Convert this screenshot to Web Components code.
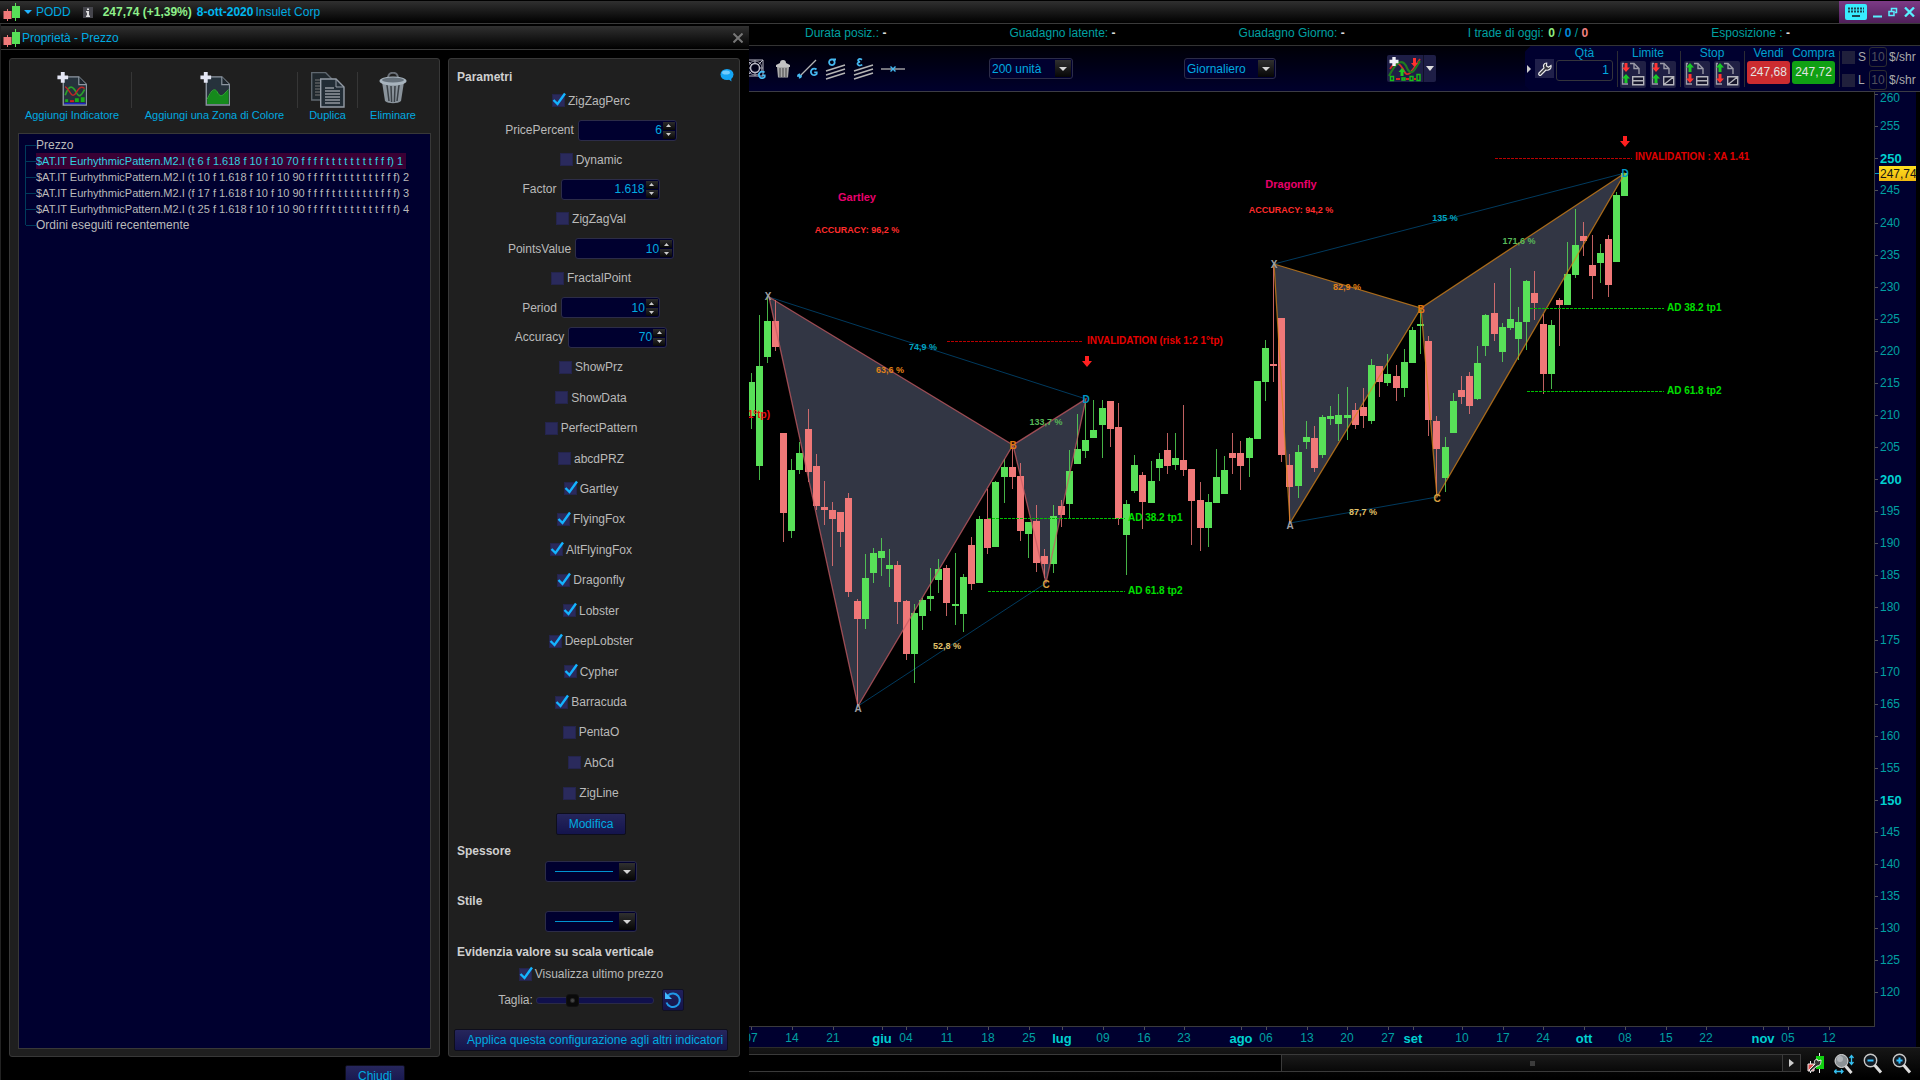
<!DOCTYPE html>
<html lang="it">
<head>
<meta charset="utf-8">
<title>PODD - Insulet Corp</title>
<style>
html,body{margin:0;height:100%;background:#000;overflow:hidden}
body{font:12px/16px "Liberation Sans",Arial,sans-serif;color:#bababa;--cy:#00aae0;--teal:#00a0a2;--navy:#00002f;--line:#383838}
</style>
</head>
<body>
<trading-app></trading-app>
<script>
const BASE = `*{box-sizing:border-box}button,input,select{font:inherit;color:inherit;margin:0;padding:0;border:0;background:none;outline:0}button{cursor:pointer}svg{display:block;flex:none}`;
function define(name, render, after) {
  customElements.define(name, class extends HTMLElement {
    connectedCallback() {
      if (this.shadowRoot) return;
      const t = document.createElement('template');
      t.innerHTML = render(this);
      const r = this.attachShadow({ mode: 'open' });
      r.innerHTML = `<style>${BASE}</style>`;
      r.append(t.content.cloneNode(true));
      if (after) after(this, r);
    }
  });
}
const attr = (e, n, d = '') => e.getAttribute(n) ?? d;
const CANDLES = `<svg width="18" height="18" viewBox="0 0 18 18"><path d="M4.5 6v12" stroke="#e87878"/><rect x="0.5" y="8" width="8" height="8" fill="#f07a7a"/><path d="M12.5 0v18" stroke="#5ce05c"/><rect x="9" y="3" width="8" height="12" fill="#58e058"/></svg>`;

/* Glyphs used by the toolbars */
const DOC = '<path d="M6 5h16l8 8v21H6z" fill="#26323c" stroke="#8d97a2" stroke-width="1.4"/><path d="M22 5v8h8" fill="#1d262e" stroke="#8d97a2" stroke-width="1.2"/>';
const PLUS = '<path d="M3.500 0h4v3.500h3.500v4H7.500V11h-4V7.500H0v-4h3.500z" fill="#e4e6f4"/>';
const ICONS = {
  indicator: `<svg width="30" height="34" viewBox="0 0 30 35">${DOC}<path d="M8 24c4-12 8-10 12-2 3 5 5 1 8-4" stroke="#2aa02a" stroke-width="1.800" fill="none"/><path d="M8 15c4 2 6 12 10 8 3-4 5-10 10-6" stroke="#c02626" stroke-width="1.500" fill="none"/><path d="M8 28h3v3H8zM18 27h4v4h-4zM24 26h4v5h-4z" fill="#18b018"/><path d="M13 29h4v2h-4z" fill="#d02020"/><path d="M7 32.500h22" stroke="#1c28c8" stroke-width="1.500"/>${PLUS}</svg>`,
  zone: `<svg width="30" height="34" viewBox="0 0 30 35">${DOC}<path d="M7 29c4-9 7-13 10-9 3 6 5 5 8 2l4-3v14H7z" fill="#158a1c"/><path d="M7 28c4-9 7-12 10-8 3 6 5 5 8 2l4-4" stroke="#30b030" fill="none"/>${PLUS}</svg>`,
  copy: `<svg width="34" height="36" viewBox="0 0 34 36"><path d="M.7.7h14l7 7V28H.7z" fill="#20282e" stroke="#606870" stroke-width="1.300"/><path d="M4 8h6M4 11h6M4 14h6M4 17h6M4 20h6M4 23h6" stroke="#777"/><path d="M9.700 7H25l8 8v20H9.700z" fill="#222d36" stroke="#949ca6" stroke-width="1.400"/><path d="M25 7v8h8" fill="none" stroke="#949ca6"/><path d="M14 16h9M14 19h15M14 22h15M14 25h15M14 28h15M14 31h15" stroke="#c8ccd2" stroke-width="1.200"/></svg>`,
  bin: `<svg width="28" height="32" viewBox="0 0 28 32"><path d="M9 6c0-7 10-7 10 0" fill="none" stroke="#6a7078" stroke-width="2"/><path d="M3 10l3 19c3 3 13 3 16 0l3-19z" fill="#8a939b"/><path d="M8 13l2 16M12 14l.6 16M16 14l-.6 16M20 13l-2 16" stroke="#3a4046" stroke-width="1.500"/><ellipse cx="14" cy="9" rx="13.500" ry="4.500" fill="#a8b4be"/><ellipse cx="14" cy="8" rx="11" ry="2.600" fill="#66717b"/></svg>`,
  grid: `<svg width="20" height="20" viewBox="0 0 20 20"><path d="M1 1h16v16H1z" fill="none" stroke="#b8b8c4"/><path d="M1 1l5 5M17 1l-5 5M1 17l5-5M9 1v4M1 9h4M13 9h4M9 13v4" stroke="#b8b8c4"/><circle cx="9" cy="9" r="4.500" fill="none" stroke="#b8b8c4" stroke-width="1.500"/><circle cx="9" cy="9" r="7" fill="none" stroke="#90909c"/><path d="M18.500 13.500a3.300 3.300 0 1 0 .2 4.500v-1.600h-2.500" fill="none" stroke="#45b8f0" stroke-width="1.800"/></svg>`,
  trash: `<svg width="14" height="18" viewBox="0 0 14 18"><path d="M4 3a3 3 0 0 1 6 0l4 2v2H0V5z" fill="#c4c4c4"/><path d="M1 7h12l-1 10.500H2z" fill="#aaa"/><path d="M4 8v9M7 8v9M10 8v9" stroke="#444"/></svg>`,
  lineg: `<svg width="21" height="20" viewBox="0 0 21 20"><path d="M2 18L19 1" stroke="#b4b4b4" stroke-width="1.300"/><path d="M0 17h5M2.500 14.500v5M.8 15.200l3.400 3.600" stroke="#45b8f0" stroke-width="1.300"/><path d="M19.500 10.500a3.300 3.300 0 1 0 .2 4.500v-1.600h-2.500" fill="none" stroke="#45b8f0" stroke-width="1.800"/></svg>`,
  sigma: `<svg width="21" height="22" viewBox="0 0 21 22"><path d="M1 13l19-6M1 17l19-6M1 21l19-6" stroke="#b4b4b4" stroke-width="1.500"/><path d="M11 1.500H6.500a2.800 2.800 0 1 0 2 0.500" fill="none" stroke="#45b8f0" stroke-width="1.800"/></svg>`,
  epsilon: `<svg width="21" height="22" viewBox="0 0 21 22"><path d="M1 13l19-6M1 17l19-6M1 21l19-6" stroke="#b4b4b4" stroke-width="1.500"/><path d="M9 1.800C6-.2 3 2.500 7 4 2.500 4.500 4.500 9 9.300 6.800" fill="none" stroke="#45b8f0" stroke-width="1.700"/></svg>`,
  hline: `<svg width="24" height="8" viewBox="0 0 24 8"><path d="M0 4h24" stroke="#b4b4b4" stroke-width="1.300"/><path d="M9.500 1.500l5 5M14.500 1.500l-5 5" stroke="#45b8f0" stroke-width="1.400"/></svg>`,
  combo: `<svg width="36" height="26" viewBox="0 0 34 26"><path d="M2 13c6-9 10-6 14 2s8 0 16-12" stroke="#d42a2a" stroke-width="1.800" fill="none"/><path d="M1 20c7-14 14-20 19-6 5 6 7-2 12-9" stroke="#1e7a1e" stroke-width="2.200" fill="none"/><path d="M6 1v9M1.500 5.500h9" stroke="#f0f0f8" stroke-width="3.400"/><path d="M25 2h3v5h2l-3.500 4L23 7h2z" fill="#ff3030"/><path d="M12.500 20v-4h-2l3.500-4 3.500 4h-2v4z" fill="#22c822"/><path d="M2.500 20.500h3v4h-3zM14 22h3v2h-3zM22 20.500h3v4h-3zM29 18.500h3v6h-3z" fill="none" stroke="#18c018" stroke-width="1.400"/><path d="M8 23h4M18 23h3M26 23h2" stroke="#e02020" stroke-width="2"/></svg>`,
  wrench: `<svg width="14" height="14" viewBox="0 0 14 14"><path d="M13 3.500l-2.500 1.800-2-1.300.2-3C5.500 1 5 4 6 6L1 11c-1 1.500.8 3 2 2l5-5c3 1 5.600-1.500 5-4.500z" fill="#33333c" stroke="#e8e8e8" stroke-width="1.200"/></svg>`,
  fit: `<svg width="18" height="22" viewBox="0 0 18 22"><path d="M3.500 9v12M12.500 1v20" stroke="#eee"/><path d="M1 12h6v7H1z" fill="#e05050" stroke="#eee"/><path d="M9 4h8v13H9z" fill="#10d010"/><path d="M14 8l-3 1-1-2c-3 1-3 3-2 5l-6 6 1.500 1.500L10 14c3 0 4-2 4-6z" fill="#333" stroke="#eee"/></svg>`,
  autozoom: `<svg width="20" height="22" viewBox="0 0 20 22"><circle cx="7.500" cy="9" r="6.500" fill="#8c9296" stroke="#ddd"/><circle cx="6" cy="7" r="3" fill="#b0b4b8"/><path d="M11.500 14l6 7" stroke="#ddd" stroke-width="3"/><path d="M17.500 4v8M15.500 6l2-2.500 2 2.500M15.500 10l2 2.500 2-2.500M0 19.500h9M2.500 17.500l-2 2 2 2M7 17.500l2 2-2 2" stroke="#35c0f0" stroke-width="1.300" fill="none"/></svg>`,
  zoomout: `<svg width="20" height="22" viewBox="0 0 20 22"><circle cx="7.500" cy="8.500" r="6.200" fill="#141c24" stroke="#c8c8c8" stroke-width="1.400"/><path d="M4.500 8.500h6" stroke="#30c0ff" stroke-width="2"/><path d="M11.500 13l6.500 7.500" stroke="#ddd" stroke-width="3"/></svg>`,
  zoomin: `<svg width="20" height="22" viewBox="0 0 20 22"><circle cx="7.500" cy="8.500" r="6.200" fill="#141c24" stroke="#c8c8c8" stroke-width="1.400"/><path d="M4.500 8.500h6M7.500 5.500v6" stroke="#30c0ff" stroke-width="2"/><path d="M11.500 13l6.500 7.500" stroke="#ddd" stroke-width="3"/></svg>`
};
const order = (a, b, tail) => {
  const up = (y, c) => `<path d="M5 ${y}l4 4.500H6.500V${y + 9}h-3V${y + 4.500}H1z" fill="${c}"/>`;
  const dn = (y, c) => `<path d="M5 ${y + 9}l4-4.500H6.500V${y}h-3v4.500H1z" fill="${c}"/>`;
  return `<svg width="24" height="24" viewBox="0 0 24 24"><path d="M9 1.500h4l5 5V12M13 1.500v5h5M7 22H1.500V1.500H3" fill="none" stroke="#9a9aa6" stroke-width="1.400"/>${(a[0] === 'd' ? dn : up)(1, a === 'd' ? '#ff3434' : '#18c828')}${(b[0] === 'd' ? dn : up)(12, b === 'd' ? '#ff3434' : '#18c828')}${tail === 'box' ? '<path d="M11.700 14.700h11v8h-11zM11.700 18.700h11" fill="#15152c" stroke="#b4b4bc" stroke-width="1.400"/>' : '<path d="M12.700 14.700h10v8h-10zM12.700 22.700l10-8" fill="#15152c" stroke="#b4b4bc" stroke-width="1.400"/>'}</svg>`;
};

define('ui-icon', e => `<style>:host{display:block;flex:none}</style>${ICONS[attr(e, 'name')]}`);

define('app-titlebar', () => `<style>
:host{display:flex;flex:none;height:24px;align-items:center;background:linear-gradient(#303030,#000);border-top:1px solid #000;border-bottom:1px solid #3a3a3a;padding-left:3px;color:var(--cy)}
.tri{width:0;border:4px solid transparent;border-top:4px solid #20b4ff;border-bottom:0;margin:0 4px 0 3px}
.info{width:10px;height:11px;background:#45454c;margin:0 10px 0 12px}
b{margin-right:5px}.p{color:#8ef08a}.d{color:#00b8f0;margin-right:2px}
.win{margin-left:auto;align-self:stretch;display:flex;align-items:center;padding:0 5px 0 6px;background:linear-gradient(#7c3a86,#50205a);gap:6px}
</style>${CANDLES}<span class="tri"></span><span>PODD</span>
<svg class="info" viewBox="0 0 10 11"><path d="M4 1.500h2v1.500H4zM3 4h3v4.500h1V10H3V8.500h1V5.500H3z" fill="#ddd"/></svg>
<b class="p">247,74 (+1,39%)</b><b class="d">8-ott-2020</b><span>Insulet Corp</span>
<div class="win"><button aria-label="Tastiera"><svg width="22" height="16" viewBox="0 0 22 16"><rect width="22" height="16" rx="2" fill="#38ecff"/><path d="M3 4.500h16M3 7.500h16" stroke="#1a4450" stroke-width="2" stroke-dasharray="2 1"/><path d="M7 12h8" stroke="#1a4450" stroke-width="2"/></svg></button>
<button aria-label="Riduci"><svg width="9" height="14"><path d="M0 11.500h9" stroke="#58f0ff" stroke-width="2"/></svg></button>
<button aria-label="Ripristina"><svg width="10" height="10" viewBox="0 0 10 10"><path d="M1 4.500h5v4H1zM3.500 4V1.500h5v4H7" fill="none" stroke="#58f0ff" stroke-width="1.500"/></svg></button>
<button aria-label="Chiudi finestra"><svg width="11" height="10" viewBox="0 0 11 10"><path d="M1 0.500l9 9M10 .5l-9 9" stroke="#58f0ff" stroke-width="2.300"/></svg></button></div>`);

define('dialog-title', () => `<style>
:host{display:flex;height:24px;align-items:center;background:linear-gradient(#303030,#000);border-bottom:1px solid #3a3a3a;padding:0 6px 0 2px;gap:1px;color:var(--cy)}
button{margin-left:auto}</style>${CANDLES}<span><slot></slot></span><button aria-label="Chiudi"><svg width="10" height="10" viewBox="0 0 10 10"><path d="M.5.5l9 9M9.500.5l-9 9" stroke="#777" stroke-width="2"/></svg></button>`);

define('tool-button', e => `<style>
:host{display:flex;border-right:1px solid #363636;height:36px;justify-content:center}
:host(:last-of-type){border:0}
button{display:flex;flex-direction:column;align-items:center;color:var(--cy);white-space:nowrap;font-size:11px;height:50px;line-height:14px;justify-content:space-between}
</style><button><ui-icon name="${attr(e, 'icon')}"></ui-icon><span><slot></slot></span></button>`);

define('tree-list', () => `<style>
:host{display:block;background:var(--navy);border:1px solid var(--line)}
ul{list-style:none;margin:3px 0 0 6px;padding:0}
li{display:flex;height:16px;line-height:16px;white-space:nowrap}
li::before{content:"";width:10px;border-left:1px solid #003c5c;background:linear-gradient(#003c5c,#003c5c) 0 8px/10px 1px no-repeat;flex:none}
li:first-child::before{border-image:linear-gradient(transparent 50%,#003c5c 50%) 1}
li:last-child::before{border-image:linear-gradient(#003c5c 50%,transparent 50%) 1}
.ind{font-size:11px}.sel span{background:#3a0034;color:#30d0e0;padding-right:3px}
</style><ul><li><span>Prezzo</span></li>
<li class="ind sel"><span>$AT.IT EurhythmicPattern.M2.I (t 6 f 1.618 f 10 f 10 70 f f f f t t t t t t t t f f f) 1</span></li>
<li class="ind"><span>$AT.IT EurhythmicPattern.M2.I (t 10 f 1.618 f 10 f 10 90 f f f f t t t t t t t t f f f) 2</span></li>
<li class="ind"><span>$AT.IT EurhythmicPattern.M2.I (f 17 f 1.618 f 10 f 10 90 f f f f t t t t t t t t f f f) 3</span></li>
<li class="ind"><span>$AT.IT EurhythmicPattern.M2.I (t 25 f 1.618 f 10 f 10 90 f f f f t t t t t t t t f f f) 4</span></li>
<li><span>Ordini eseguiti recentemente</span></li></ul>`);

define('prm-check', e => `<style>
:host{display:flex;align-items:center;justify-content:center}
label{display:flex;align-items:center;gap:3px}
input{appearance:none;width:13px;height:13px;background:#2a2a5c;border:1px solid #24244c}
i{position:relative;display:block;width:13px;height:13px}
svg{position:absolute;left:0;top:-2px;display:none}input:checked+svg{display:block}
</style><label><i><input type="checkbox" ${e.hasAttribute('checked') ? 'checked' : ''}><svg width="14" height="14" viewBox="0 0 14 14"><path d="M1.500 8l4 4L13 1.500" fill="none" stroke="#14b4ff" stroke-width="2.400"/></svg></i><span><slot></slot></span></label>`);

define('prm-number', e => `<style>
:host{display:flex;align-items:center;justify-content:center;gap:4px}
.box{display:flex;align-items:center;width:99px;height:21px;border:1px solid #2c2c48;border-radius:3px;background:var(--navy);padding-right:1px}
input{flex:1;min-width:0;text-align:right;color:var(--cy);height:100%;padding-right:1px}
.st{display:flex;flex-direction:column;gap:1px}
button{width:12px;height:8px;background:linear-gradient(#2c2c2c,#080808);display:flex;align-items:center;justify-content:center}
</style><label for="n"><slot></slot></label><div class="box"><input id="n" inputmode="decimal" value="${attr(e, 'value')}"><span class="st"><button aria-label="Aumenta"><svg width="5" height="3"><path d="M0 3L2.500 0 5 3z" fill="#ccc"/></svg></button><button aria-label="Diminuisci"><svg width="5" height="3"><path d="M0 0l2.500 3L5 0z" fill="#ccc"/></svg></button></span></div>`);

define('drop-down', e => `<style>
:host{position:relative;display:block;width:var(--w,92px);height:21px;flex:none}
select{appearance:none;width:100%;height:100%;background:var(--navy);border:1px solid #2c2c48;border-radius:3px;padding-left:2px;color:var(--cy)}
.line{background:linear-gradient(#0094d0,#0094d0) 9px 9px/58px 1px no-repeat,var(--navy)}
svg{position:absolute;right:2px;top:2px;bottom:2px;height:calc(100% - 4px);background:linear-gradient(#303030,#060606);pointer-events:none}
</style><select aria-label="${attr(e, 'label')}" class="${attr(e, 'kind')}">${attr(e, 'value') ? `<option>${attr(e, 'value')}</option>` : '<option></option>'}</select><svg width="16" height="17" viewBox="0 0 16 17"><path d="M4 7h8l-4 4z" fill="#d4d4d4"/></svg>`);

define('push-button', () => `<style>
:host{display:block}button{width:100%;height:22px;border:1px solid #0e0e1c;border-radius:2px;background:linear-gradient(#26265c,#14144c);color:var(--cy);padding:0 12px;white-space:nowrap}
</style><button><slot></slot></button>`);

define('param-panel', () => `<style>
:host{display:flex;flex-direction:column;background:#1f1f1f;border:1px solid var(--line);border-radius:3px;padding:0 11px 5px 5px}
header{display:flex;justify-content:space-between;height:27px;padding:10px 0 0 3px}
h3{margin:0;padding-left:3px;font-size:12px;font-weight:bold;color:#cfcfcf;line-height:20px}
header h3{padding:0;line-height:17px}header svg{margin-right:-6px}
.g1{display:grid;grid-template-rows:repeat(9,1fr);height:266px}
.g2{display:grid;grid-template-rows:repeat(16,1fr);height:487px}
.mid{display:flex;justify-content:center;align-items:center}
.sz{display:flex;justify-content:center;align-items:center;height:28px}
input{appearance:none;width:118px;height:14px;margin:0 8px 0 3px}
input::-webkit-slider-runnable-track{height:7px;border-radius:3px;background:#10104c;border:1px solid #2a2a48}
input::-webkit-slider-thumb{appearance:none;width:13px;height:13px;margin-top:-4px;border-radius:3px;background:radial-gradient(#444 1px,#0a0a0a 3px);border:1px solid #111}
.r{width:22px;height:22px;background:linear-gradient(#20205c,#14144a);border:1px solid #101024;border-radius:2px;display:flex;align-items:center;justify-content:center}
</style>
<header><h3>Parametri</h3><svg width="14" height="13" viewBox="0 0 14 13"><ellipse cx="7" cy="5.500" rx="6.500" ry="5.500" fill="#14a4f4"/><path d="M7 9l4.500 3.500-.5-4z" fill="#14a4f4"/><ellipse cx="6" cy="3.500" rx="4" ry="2" fill="#70ccff"/></svg></header>
<div class="g1"><prm-check checked>ZigZagPerc</prm-check><prm-number value="6">PricePercent</prm-number><prm-check>Dynamic</prm-check><prm-number value="1.618">Factor</prm-number><prm-check>ZigZagVal</prm-check><prm-number value="10">PointsValue</prm-number><prm-check>FractalPoint</prm-check><prm-number value="10">Period</prm-number><prm-number value="70">Accuracy</prm-number></div>
<div class="g2"><prm-check>ShowPrz</prm-check><prm-check>ShowData</prm-check><prm-check>PerfectPattern</prm-check><prm-check>abcdPRZ</prm-check><prm-check checked>Gartley</prm-check><prm-check checked>FlyingFox</prm-check><prm-check checked>AltFlyingFox</prm-check><prm-check checked>Dragonfly</prm-check><prm-check checked>Lobster</prm-check><prm-check checked>DeepLobster</prm-check><prm-check checked>Cypher</prm-check><prm-check checked>Barracuda</prm-check><prm-check>PentaO</prm-check><prm-check>AbCd</prm-check><prm-check>ZigLine</prm-check><div class="mid"><push-button>Modifica</push-button></div></div>
<h3 style="padding-top:2px">Spessore</h3><div class="mid"><drop-down kind="line" label="Spessore"></drop-down></div>
<h3 style="padding-top:9px">Stile</h3><div class="mid"><drop-down kind="line" label="Stile"></drop-down></div>
<h3 style="padding-top:10px">Evidenzia valore su scala verticale</h3>
<prm-check checked style="height:24px">Visualizza ultimo prezzo</prm-check>
<div class="sz"><label for="t">Taglia:</label><input id="t" type="range" value="28"><button class="r" aria-label="Ripristina"><svg width="18" height="18" viewBox="0 0 18 18"><path d="M4 4.500a6.800 6.800 0 1 1-1.500 7" fill="none" stroke="#2098e8" stroke-width="2"/><path d="M1 1v7h7z" fill="#40b8ff"/></svg></button></div>
<push-button style="margin-top:15px">Applica questa configurazione agli altri indicatori</push-button>`);

define('properties-dialog', () => `<style>
:host{display:block;width:749px;flex:none;padding-top:2px;border-left:1px solid #222}
.panels{display:flex;gap:8px;padding:8px 9px 0 8px}
.left{flex:1;display:flex;flex-direction:column;background:#1f1f1f;border:1px solid var(--line);border-radius:3px}
nav{display:grid;grid-template-columns:119px 166px 60px 70px;height:74px;padding:13px 0 0 3px}
tree-list{flex:1;margin:0 8px 7px}
param-panel{width:292px}
footer{display:flex;justify-content:center;padding:8px 0 0}footer push-button{width:60px}
</style><dialog-title>Proprietà - Prezzo</dialog-title>
<div class="panels"><section class="left"><nav><tool-button icon="indicator">Aggiungi Indicatore</tool-button><tool-button icon="zone">Aggiungi una Zona di Colore</tool-button><tool-button icon="copy">Duplica</tool-button><tool-button icon="bin">Eliminare</tool-button></nav><tree-list></tree-list></section><param-panel></param-panel></div>
<footer><push-button>Chiudi</push-button></footer>`);

define('info-row', () => `<style>
:host{display:flex;justify-content:space-between;height:22px;padding:1px 130px 0 56px;border-bottom:1px solid #333;color:var(--teal);white-space:nowrap}
b{color:#ddd}.g{color:#90ec80;margin-left:1px}.b{color:#0088d8}.r{color:#f08080}
</style><span>Durata posiz.: <b>-</b></span><span>Guadagno latente: <b>-</b></span><span>Guadagno Giorno: <b>-</b></span><span>I trade di oggi: <b class="g">0</b> / <b class="b">0</b> / <b class="r">0</b></span><span>Esposizione : <b>-</b></span>`);

define('order-panel', () => `<style>
:host{display:flex;height:46px;flex:none;width:395px;color:var(--cy);background:var(--navy);clip-path:polygon(6px 0,100% 0,100% 100%,6px 100%,0 40px,0 6px);align-items:stretch;padding-left:2px}
.arr{align-self:center;border:4px solid transparent;border-left-color:#ccc;border-right:0}
.col{display:flex;flex-direction:column;align-items:center;color:#00a0d0;line-height:14px}
.w{align-self:center;margin:0 2px 0 4px;width:19px;height:19px;background:#20204a;display:flex;align-items:center;justify-content:center}
.q{width:57px;height:21px;border:1px solid #34343c;border-radius:3px;text-align:right;padding-right:3px;color:var(--cy)}
.sep{width:1px;margin:5px 3px 5px 4px;background:#2c2c34}
.bs{display:flex;gap:4px;padding-top:1px}.ib{width:26px;height:27px;background:#202044;display:flex;align-items:center;justify-content:center;border-radius:2px}
.t{width:43px;height:23px;color:#e4e4e4;border-radius:3px;margin-top:1px}
.v{background:#cc2c30}.c{background:#10a014}
.k{display:flex;flex-direction:column;padding:1px 0;justify-content:space-between;color:#aaa}
.k div{display:flex;align-items:center;height:21px}.k input[type=checkbox]{appearance:none;width:13px;height:13px;background:#20203c}
.k label{display:flex;align-items:center}.k label span{width:11px;margin-left:3px}.n{width:18px;height:20px;border:1px solid #2c2c30;border-radius:3px;color:#50505c;text-align:center;margin-right:2px}
</style><span class="arr"></span><button class="w" aria-label="Impostazioni">${ICONS.wrench}</button>
<div class="col"><label for="q">Qtà</label><input class="q" id="q" value="1"></div><i class="sep" style="margin-right:2px"></i>
<div class="col"><span>Limite</span><div class="bs"><button class="ib" aria-label="Limite">${order('d', 'u', 'box')}</button><button class="ib" aria-label="Limite grafico">${order('d', 'u', 'x')}</button></div></div><i class="sep"></i>
<div class="col"><span>Stop</span><div class="bs"><button class="ib" aria-label="Stop">${order('u', 'd', 'box')}</button><button class="ib" aria-label="Stop grafico">${order('u', 'd', 'x')}</button></div></div><i class="sep" style="margin-right:2px"></i>
<div class="col"><span>Vendi</span><button class="t v">247,68</button></div>
<div class="col" style="margin-left:2px"><span>Compra</span><button class="t c">247,72</button></div><i class="sep" style="margin-right:2px"></i>
<div class="k"><div><label><input type="checkbox"><span>S</span></label><input class="n" aria-label="Distanza S" value="10"><span>$/shr</span></div><div><label><input type="checkbox"><span>L</span></label><input class="n" aria-label="Distanza L" value="10"><span>$/shr</span></div></div>`);

define('chart-toolbar', () => `<style>
:host{display:flex;align-items:center;height:46px;background:linear-gradient(#000006,#00002c);border-bottom:1px solid #3c3c44;overflow:hidden}
.tools{display:flex;align-items:center;gap:7px;margin-left:-3px}.tools button{display:block}
.combo{display:flex;background:#1e1e46;height:27px;align-items:center;border-radius:2px}
.combo button{height:27px;display:flex;align-items:center}.combo .a{width:13px;border-left:1px solid #101028;justify-content:center}
order-panel{margin-left:auto}
</style><div class="tools"><button aria-label="Gann"><ui-icon name="grid"></ui-icon></button><button aria-label="Elimina" style="margin-left:3px"><ui-icon name="trash"></ui-icon></button><button aria-label="Linea G"><ui-icon name="lineg"></ui-icon></button><button aria-label="Sigma"><ui-icon name="sigma"></ui-icon></button><button aria-label="Epsilon"><ui-icon name="epsilon"></ui-icon></button><button aria-label="Orizzontale"><ui-icon name="hline"></ui-icon></button></div>
<drop-down style="--w:84px;margin-left:84px" label="Unità" value="200 unità"></drop-down>
<drop-down style="--w:92px;margin-left:111px" label="Periodo" value="Giornaliero"></drop-down>
<div class="combo" style="margin-left:111px"><button aria-label="Indicatori"><ui-icon name="combo"></ui-icon></button><button class="a" aria-label="Altro"><svg width="8" height="5"><path d="M0 0h8L4 5z" fill="#ddd"/></svg></button></div>
<order-panel></order-panel>`);

/* high, low, body top, body bottom, g = up / r = down; one entry for each session */
const BARS = `373 429 382 416 g|315 480 366 466 g|297 363 321 357 g|300 351 321 347 r|433 542 433 513 r|459 538 470 531 g|442 474 453 470 g|409 482 429 472 r|454 510 466 506 r|481 525 507 510 r|502 566 510 519 r|512 547 512 532 r|493 597 498 592 r|599 707 601 619 r|554 629 578 619 g|548 583 553 573 g|538 576 551 558 g|549 587 565 569 g|561 624 565 602 r|600 660 601 654 r|604 683 613 654 g|598 630 600 616 g|568 611 596 599 g|559 593 569 580 g|565 616 568 603 r|553 625 604 605 g|574 632 577 614 g|537 590 545 584 r|516 583 519 583 g|489 554 519 548 r|481 547 482 547 g|459 503 467 477 g|447 489 467 477 r|463 541 476 531 r|522 558 522 534 g|505 572 521 563 r|549 578 556 564 r|505 573 516 564 g|500 527 506 515 r|450 519 471 504 g|414 464 449 464 g|402 458 440 451 g|400 438 430 438 g|400 458 408 425 g|401 447 401 429 r|403 525 427 519 r|500 575 504 535 g|455 493 465 491 g|472 529 475 502 r|461 503 481 503 g|453 481 459 468 g|433 474 450 466 r|433 470 458 465 g|405 476 460 470 r|469 545 469 501 r|482 551 500 528 r|494 547 502 528 g|449 503 477 503 g|456 494 470 494 g|433 474 453 458 r|441 490 453 466 r|437 477 438 458 g|381 439 381 439 g|340 401 348 382 g|265 382 364 366 r|318 462 318 455 r|454 523 465 487 r|445 498 452 486 g|421 449 437 442 g|426 472 438 468 r|415 458 417 455 g|406 425 416 419 g|394 441 415 424 g|387 440 415 418 g|403 429 410 425 r|388 428 407 416 r|359 424 365 421 g|366 397 366 382 r|354 386 374 383 g|365 401 376 388 r|349 397 362 388 g|327 363 330 363 g|310 354 324 326 g|336 436 341 420 r|416 495 421 449 r|437 492 447 478 g|393 433 401 433 g|376 404 390 397 r|372 414 376 406 r|346 400 363 399 g|314 356 315 346 g|283 341 313 334 r|323 362 327 352 g|268 330 319 328 g|307 360 322 339 g|280 350 281 322 g|271 320 293 303 r|314 394 324 374 r|320 389 325 374 g|298 346 300 305 r|242 305 274 305 g|209 278 245 275 g|222 256 236 241 r|235 299 265 276 r|244 283 253 263 g|235 297 239 285 r|192 262 195 262 g|173 196 173 196 g`;
const MARKS = [
  [923, 347, '74,9 %', '#00a4c0', 9], [890, 370, '63,6 %', '#e08018', 9], [1046, 422, '133,7 %', '#58b858', 9], [947, 646, '52,8 %', '#e0c068', 9],
  [857, 197, 'Gartley', '#e8006c', 11], [857, 230, 'ACCURACY: 96,2 %', '#ff2c2c', 9], [1291, 184, 'Dragonfly', '#e8006c', 11], [1291, 210, 'ACCURACY: 94,2 %', '#ff2c2c', 9],
  [1445, 218, '135 %', '#00a4c0', 9], [1519, 241, '171,6 %', '#58b858', 9], [1347, 287, '82,9 %', '#e08018', 9], [1363, 512, '87,7 %', '#e0c068', 9],
  [768, 296, 'X', '#a0a0a4', 10], [858, 708, 'A', '#a0a0a4', 10], [1013, 445, 'B', '#e07810', 10], [1046, 584, 'C', '#d8a040', 10], [1086, 399, 'D', '#0098c8', 10],
  [1274, 264, 'X', '#a0a0a4', 10], [1290, 525, 'A', '#a0a0a4', 10], [1421, 309, 'B', '#e07810', 10], [1437, 498, 'C', '#d8a040', 10], [1625, 173, 'D', '#0098c8', 10],
  [1087, 340, 'INVALIDATION (risk 1:2 1°tp)', '#e80000', 10, 'start'], [1635, 156, 'INVALIDATION : XA 1.41', '#e00000', 10, 'start'],
  [1128, 517, 'AD 38.2 tp1', '#00e000', 10, 'start'], [1128, 590, 'AD 61.8 tp2', '#00e000', 10, 'start'], [1667, 307, 'AD 38.2 tp1', '#00e000', 10, 'start'], [1667, 390, 'AD 61.8 tp2', '#00e000', 10, 'start'],
  [770, 414, '1°tp)', '#f01010', 10, 'end']
];
const TIMES = [[751, '07'], [792, '14'], [833, '21'], [882, 'giu'], [906, '04'], [947, '11'], [988, '18'], [1029, '25'], [1062, 'lug'], [1103, '09'], [1144, '16'], [1184, '23'], [1241, 'ago'], [1266, '06'], [1307, '13'], [1347, '20'], [1388, '27'], [1413, 'set'], [1462, '10'], [1503, '17'], [1543, '24'], [1584, 'ott'], [1625, '08'], [1666, '15'], [1706, '22'], [1763, 'nov'], [1788, '05'], [1829, '12']];

define('price-chart', () => {
  const C = { g: '#58e058', r: '#f07878' };
  const bars = BARS.split('|').map((b, i) => {
    const [h, l, t, m, c] = b.split(' '), x = Math.round(751.5 + i * 8.166);
    return `<path d="M${x - 0.5} ${h}V${l}" stroke="${C[c]}" opacity=".8"/><rect x="${x - 4}" y="${t}" width="7" height="${Math.max(2, m - t)}" fill="${C[c]}"/>`;
  }).join('');
  const text = (x, y, s, f, z, a = 'middle', w = 'bold') => `<text x="${x}" y="${y}" fill="${f}" font-size="${z}" text-anchor="${a}" font-weight="${w}" dominant-baseline="central">${s}</text>`;
  const arrow = (x, y) => `<path d="M${x - 2} ${y}h4v5h3l-5 6-5-6h3z" fill="#ff2020"/>`;
  const edges = (pts, c) => `<path d="M${pts[0]}L${pts[1]}L${pts[2]}L${pts[3]}L${pts[4]}L${pts[2]}L${pts[0]}" fill="none" stroke="${c}" stroke-width="1.300" opacity=".75"/>`;
  const fill = p => `<path d="M${p[0]}L${p[1]}L${p[2]}zM${p[2]}L${p[3]}L${p[4]}z" fill="#323644"/><path d="M${p[0]}L${p[4]}M${p[1]}L${p[3]}" stroke="#003a5e"/>`;
  const P1 = ['769 297', '858 706', '1013 445', '1046 583', '1086 399'], P2 = ['1274 264', '1290 523', '1421 308', '1437 497', '1625 173'];
  const prices = [];
  for (let p = 260, i = 0; p >= 120; p -= 5, i++) {
    const y = Math.round(94.2 + i * 32.08), big = p % 50 === 0;
    prices.push(`<path d="M1875 ${y + 0.5}h3" stroke="#505058"/>` + text(1880, i ? y : 98, p, big ? '#00d0d0' : '#00a0a2', big ? 13 : 12, 'start', big ? 'bold' : 'normal'));
  }
  const times = TIMES.map(([x, s]) => `<path d="M${x + 0.5} 1027v3" stroke="#505058"/>` + text(x, 1038, s, isNaN(s) ? '#00d0d0' : '#00a0a2', isNaN(s) ? 13 : 12, 'middle', isNaN(s) ? 'bold' : 'normal')).join('');
  return `<style>:host{display:block;flex:1;min-height:0}svg{width:100%;height:100%}</style>
<svg viewBox="749 92 1171 955" preserveAspectRatio="xMaxYMid meet" role="img" aria-label="Grafico PODD giornaliero">
<defs><linearGradient id="y" x2="0" y2="1"><stop stop-color="#ffe020"/><stop offset="1" stop-color="#f0b810"/></linearGradient></defs>
<rect x="1875" y="92" width="41" height="955" fill="#00002f"/><rect x="749" y="1027" width="1167" height="20" fill="#00002f"/>
<path d="M749 1026.500H1875M1874.500 92V1027" stroke="#3a3a3c" fill="none"/>
${fill(P1)}${fill(P2)}<g shape-rendering="crispEdges">${bars}</g>${edges(P1, '#c85c64')}${edges(P2, '#d88418')}
<g stroke-dasharray="3 1" shape-rendering="crispEdges"><path d="M988 518.500h137M988 591.500h137M1530 308.500h134M1527 391.500h137" stroke="#00c000"/><path d="M947 341.500h136M1495 158.500h137" stroke="#b80000"/></g>
${arrow(1087, 356)}${arrow(1625, 136)}${MARKS.map(m => text(...m)).join('')}
${prices.join('')}<path d="M1875 173.500h4" stroke="#009ac0"/><rect x="1879" y="166" width="37" height="15" fill="url(#y)"/>${text(1880, 174, '247,74', '#141414', 12, 'start', 'normal')}${times}</svg>`;
});

define('time-scroll', () => `<style>
:host{display:flex;height:33px;flex:none;border-top:1px solid #2c2c2c;background:linear-gradient(#161616,#000 30px);align-items:flex-start}
.track{flex:1;margin-top:6px;height:18px;border:1px solid #3a3a3a;border-left:0;background:#000;display:flex;justify-content:flex-end}
.thumb{width:502px;background:linear-gradient(#1a1a1a,#080808);border-left:1px solid #3a3a3a;border-right:1px solid #3a3a3a;display:flex;align-items:center;justify-content:center}
.thumb i{width:5px;height:5px;background:#3c3c3c}
.go{width:17px;display:flex;align-items:center;justify-content:center;background:#141414}
.ic{display:flex;gap:9px;padding:4px 8px 0 6px}
</style><div class="track"><span class="thumb"><i></i></span><button class="go" aria-label="Avanti"><svg width="5" height="8"><path d="M0 0l5 4-5 4z" fill="#ccc"/></svg></button></div>
<div class="ic"><button aria-label="Adatta"><ui-icon name="fit"></ui-icon></button><button aria-label="Zoom automatico"><ui-icon name="autozoom"></ui-icon></button><button aria-label="Riduci zoom"><ui-icon name="zoomout"></ui-icon></button><button aria-label="Aumenta zoom"><ui-icon name="zoomin"></ui-icon></button></div>`);

define('trading-app', () => `<style>
:host{display:flex;flex-direction:column;height:100vh;overflow:hidden}
main{flex:1;display:flex;min-height:0}
.work{flex:1;min-width:0;display:flex;flex-direction:column}
</style><app-titlebar></app-titlebar><main><properties-dialog></properties-dialog><section class="work"><info-row></info-row><chart-toolbar></chart-toolbar><price-chart></price-chart><time-scroll></time-scroll></section></main>`);
</script>
</body>
</html>
